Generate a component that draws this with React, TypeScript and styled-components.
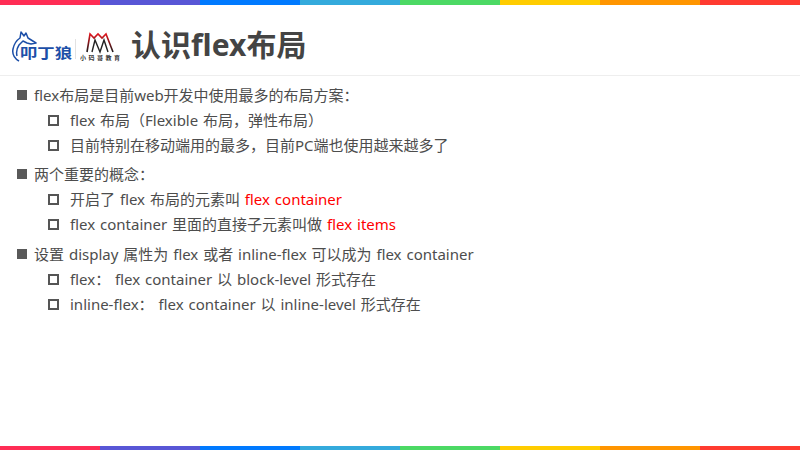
import styled, { createGlobalStyle } from "styled-components";

const GlobalStyle = createGlobalStyle`
  html, body {
    margin: 0;
    padding: 0;
    background: #fff;
  }
`;

const barColors = ["#ff2d55", "#5856d6", "#007aff", "#34aadc", "#4cd964", "#ffcc00", "#ff9500", "#ff3b30"];

const Slide = styled.div`
  width: 800px;
  height: 450px;
  display: flex;
  flex-direction: column;
  overflow: hidden;
  background: #fff;
  font-family: "Noto Sans", "Noto Sans CJK SC", sans-serif;
  color: #4d4d4d;
`;

const RainbowBar = styled.div<{ $height: number }>`
  display: flex;
  flex: none;
  height: ${({ $height }) => $height}px;
`;

const BarSegment = styled.div<{ $color: string }>`
  flex: 1;
  background: ${({ $color }) => $color};
`;

const Header = styled.header`
  flex: none;
  height: 71px;
  display: flex;
  align-items: center;
  gap: 11px;
  padding: 8px 0 0 11px;
  box-sizing: border-box;
  border-bottom: 1px solid #eeeeee;
`;

const Logos = styled.div`
  display: flex;
  align-items: center;
  margin-top: 5px;
`;

const Title = styled.h1`
  margin: 2px 0 0;
  font-family: "Noto Sans", "Noto Sans CJK SC", sans-serif;
  font-size: 30px;
  font-weight: 700;
  line-height: 40px;
  color: #444444;
`;

const Content = styled.main`
  flex: 1;
  padding: 6px 0 0 17px;
`;

const Group = styled.section<{ $gap: number }>`
  margin-bottom: ${({ $gap }) => $gap}px;
`;

const Row = styled.div<{ $nested?: boolean }>`
  height: 25px;
  display: flex;
  align-items: center;
  padding-left: ${({ $nested }) => ($nested ? 31 : 0)}px;
  font-size: 15px;
  word-spacing: 1px;
  white-space: pre;
`;

const SolidBullet = styled.span`
  flex: none;
  width: 10px;
  height: 10px;
  margin-right: 7px;
  background: #595959;
`;

const HollowBullet = styled.span`
  flex: none;
  width: 11px;
  height: 11px;
  box-sizing: border-box;
  margin: 1px 11px 0 0;
  border: 2px solid #555555;
`;

const Accent = styled.span`
  color: #ff0000;
`;

const Divider = styled.span`
  width: 1px;
  height: 20px;
  margin: 4px 4px 0 2px;
  background: #e2e2e2;
`;

const WolfLogo = () => (
  <svg width="62" height="32" viewBox="0 0 62 32">
    <path
      d="M8 30C3 27 1 23 2 18C3 13 6 9 9 7L10 1L13 5L15 2L17 7L25 12L20 13L16 12L12 10L8 14C6 17 5 21 6 25"
      fill="none"
      stroke="#1c4fa8"
      strokeWidth="1.5"
      strokeLinejoin="round"
    />
    <text
      x="9"
      y="27"
      textLength="52"
      lengthAdjust="spacingAndGlyphs"
      fontFamily="'Noto Sans CJK SC', sans-serif"
      fontSize="14"
      fontWeight="700"
      fill="#1c4fa8"
    >
      叩丁狼
    </text>
  </svg>
);

const MaLogo = () => (
  <svg width="40" height="32" viewBox="0 0 40 32">
    <defs>
      <linearGradient id="maFade" x1="0" y1="0" x2="0" y2="1">
        <stop offset="0" stopColor="#e0141c" />
        <stop offset="1" stopColor="#1a1a1a" />
      </linearGradient>
    </defs>
    <path d="M7 21L10 3L14 7L18 3L22 7L26 3L33 21" fill="none" stroke="url(#maFade)" strokeWidth="1.6" />
    <path d="M12 21L15 9L20 21L24 9L28 21" fill="none" stroke="#222222" strokeWidth="1.4" />
    <text
      x="0"
      y="28.5"
      textLength="40"
      fontFamily="'Noto Sans CJK SC', sans-serif"
      fontSize="6"
      fontWeight="700"
      fill="#333333"
    >
      小码哥教育
    </text>
  </svg>
);

const groups = [
  {
    gap: 4,
    title: "flex布局是目前web开发中使用最多的布局方案：",
    items: [<>flex 布局（Flexible 布局，弹性布局）</>, <>目前特别在移动端用的最多，目前PC端也使用越来越多了</>],
  },
  {
    gap: 5,
    title: "两个重要的概念：",
    items: [
      <>
        开启了 flex 布局的元素叫 <Accent>flex container</Accent>
      </>,
      <>
        flex container 里面的直接子元素叫做 <Accent>flex items</Accent>
      </>,
    ],
  },
  {
    gap: 0,
    title: "设置 display 属性为 flex 或者 inline-flex 可以成为 flex container",
    items: [<>flex： flex container 以 block-level 形式存在</>, <>inline-flex： flex container 以 inline-level 形式存在</>],
  },
];

export default function App() {
  return (
    <Slide>
      <GlobalStyle />
      <RainbowBar $height={5}>
        {barColors.map((color) => (
          <BarSegment key={color} $color={color} />
        ))}
      </RainbowBar>
      <Header>
        <Logos>
          <WolfLogo />
          <Divider />
          <MaLogo />
        </Logos>
        <Title>认识flex布局</Title>
      </Header>
      <Content>
        {groups.map((group) => (
          <Group key={group.title} $gap={group.gap}>
            <Row>
              <SolidBullet />
              {group.title}
            </Row>
            {group.items.map((item, index) => (
              <Row key={index} $nested>
                <HollowBullet />
                <span>{item}</span>
              </Row>
            ))}
          </Group>
        ))}
      </Content>
      <RainbowBar $height={4}>
        {barColors.map((color) => (
          <BarSegment key={color} $color={color} />
        ))}
      </RainbowBar>
    </Slide>
  );
}
